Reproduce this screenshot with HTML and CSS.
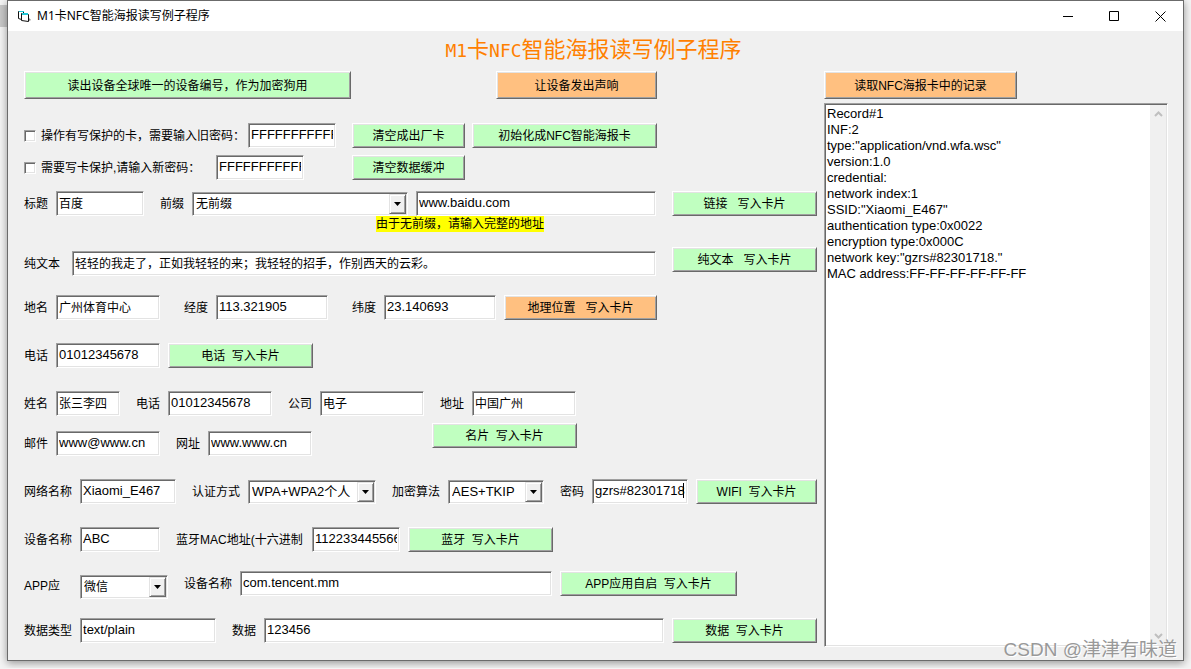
FILE: index.html
```html
<!DOCTYPE html>
<html lang="zh-CN">
<head>
<meta charset="utf-8">
<meta name="viewport" content="width=device-width, initial-scale=1">
<title>M1卡NFC智能海报读写例子程序</title>
<link rel="stylesheet" href="styles.css">
</head>
<body>
<main class="window">
  <header class="titlebar">
    <svg class="app-icon" width="14" height="13" viewBox="0 0 14 13" aria-hidden="true">
      <path d="M.5 8.500V1.500H5.500V3.500M.5 8.500L3.500 9.500" fill="#fff" stroke="#111"/>
      <path d="M1 1h5v1H1z" fill="#20c8d8"/>
      <path d="M3.500 3.500L10.500 4.500V11.500L3.500 10.500z" fill="#fff" stroke="#111"/>
      <path d="M4 3h6v2H4z" fill="#20c8d8"/>
      <path d="M11 8l2 2-2 1z" fill="#888"/>
    </svg>
    <span class="caption">M1卡NFC智能海报读写例子程序</span>
    <button class="sys" type="button" aria-label="最小化"><svg width="11" height="11" viewBox="0 0 11 11"><path d="M0 5.500h10" stroke="#000" fill="none"/></svg></button>
    <button class="sys" type="button" aria-label="最大化"><svg width="11" height="11" viewBox="0 0 11 11"><path d="M.5 .5h9v9h-9z" stroke="#000" fill="none"/></svg></button>
    <button class="sys" type="button" aria-label="关闭"><svg width="11" height="11" viewBox="0 0 11 11"><path d="M.5 .5l10 10M10.500 .5l-10 10" stroke="#000" fill="none"/></svg></button>
  </header>

  <h1 class="heading"><span class="half">M1</span>卡<span class="half">NFC</span>智能海报读写例子程序</h1>

  <div class="columns">
    <form class="form">
      <div class="row">
        <button class="btn tall w-device" type="button">读出设备全球唯一的设备编号，作为加密狗用</button>
        <button class="btn tall orange beep" type="button">让设备发出声响</button>
      </div>

      <div class="row space-xxl">
        <div class="field">
          <label class="check w-old"><input type="checkbox">操作有写保护的卡，需要输入旧密码：</label>
          <input class="text w-88" type="text" value="FFFFFFFFFFFF" aria-label="旧密码">
        </div>
        <div class="actions">
          <button class="btn w-clear" type="button">清空成出厂卡</button>
          <button class="btn w-init" type="button">初始化成NFC智能海报卡</button>
        </div>
      </div>

      <div class="row wide space-s">
        <div class="field">
          <label class="check w-new"><input type="checkbox">需要写卡保护,请输入新密码：</label>
          <input class="text w-88" type="text" value="FFFFFFFFFFFF" aria-label="新密码">
        </div>
        <button class="btn w-clear" type="button">清空数据缓冲</button>
      </div>

      <div class="row space-m">
        <div class="field"><label for="title">标题</label><input class="text w-88" id="title" type="text" value="百度"></div>
        <div class="field grow">
          <label for="prefix">前缀</label>
          <span class="combo w-216"><select id="prefix"><option>无前缀</option></select><span class="drop"><svg width="7" height="4" viewBox="0 0 7 4"><path d="M0 0h7L3.500 4z"/></svg></span></span>
          <input class="text grow" type="text" value="www.baidu.com" aria-label="网址">
        </div>
        <button class="btn w-145" type="button">链接&nbsp;&nbsp; 写入卡片</button>
      </div>
      <p class="hint"><mark>由于无前缀，请输入完整的地址</mark></p>

      <div class="row low space-t">
        <div class="field grow"><label class="w-40" for="plain">纯文本</label><input class="text grow" id="plain" type="text" value="轻轻的我走了，正如我轻轻的来；我轻轻的招手，作别西天的云彩。"></div>
        <button class="btn w-145 lead" type="button">纯文本&nbsp;&nbsp; 写入卡片</button>
      </div>

      <div class="row geo space-l">
        <div class="field"><label for="place">地名</label><input class="text w-104" id="place" type="text" value="广州体育中心"></div>
        <div class="field"><label for="lng">经度</label><input class="text w-112" id="lng" type="text" value="113.321905"></div>
        <div class="field">
          <label for="lat">纬度</label><input class="text w-112" id="lat" type="text" value="23.140693">
          <button class="btn orange w-153" type="button">地理位置&nbsp;&nbsp; 写入卡片</button>
        </div>
      </div>

      <div class="row space-xl">
        <div class="field">
          <label for="tel">电话</label><input class="text w-104" id="tel" type="text" value="01012345678">
          <button class="btn w-145" type="button">电话&nbsp; 写入卡片</button>
        </div>
      </div>

      <div class="row space-xl">
        <div class="field"><label for="name">姓名</label><input class="text w-64" id="name" type="text" value="张三李四"></div>
        <div class="field"><label for="tel2">电话</label><input class="text w-104" id="tel2" type="text" value="01012345678"></div>
        <div class="field"><label for="company">公司</label><input class="text w-104" id="company" type="text" value="电子"></div>
        <div class="field"><label for="address">地址</label><input class="text w-104" id="address" type="text" value="中国广州"></div>
      </div>

      <div class="row low card space-s">
        <div class="field"><label for="mail">邮件</label><input class="text w-104" id="mail" type="text" value="www@www.cn"></div>
        <div class="field"><label for="site">网址</label><input class="text w-104" id="site" type="text" value="www.www.cn"></div>
        <button class="btn w-145 lead vcard" type="button">名片&nbsp; 写入卡片</button>
      </div>

      <div class="row space-xl">
        <div class="field"><label for="ssid">网络名称</label><input class="text w-96" id="ssid" type="text" value="Xiaomi_E467"></div>
        <div class="field"><label for="auth">认证方式</label><span class="combo w-128"><select id="auth"><option>WPA+WPA2个人</option></select><span class="drop"><svg width="7" height="4" viewBox="0 0 7 4"><path d="M0 0h7L3.500 4z"/></svg></span></span></div>
        <div class="field"><label for="cipher">加密算法</label><span class="combo w-96"><select id="cipher"><option>AES+TKIP</option></select><span class="drop"><svg width="7" height="4" viewBox="0 0 7 4"><path d="M0 0h7L3.500 4z"/></svg></span></span></div>
        <div class="field">
          <label for="key">密码</label><span class="caret-box"><input class="text w-96" id="key" type="text" value="gzrs#82301718."><i class="caret"></i></span>
          <button class="btn w-121" type="button">WIFI&nbsp; 写入卡片</button>
        </div>
      </div>

      <div class="row space-xl">
        <div class="field"><label for="bt">设备名称</label><input class="text w-80" id="bt" type="text" value="ABC"></div>
        <div class="field">
          <label class="w-128" for="mac">蓝牙MAC地址(十六进制</label><input class="text w-88" id="mac" type="text" value="112233445566">
          <button class="btn w-145" type="button">蓝牙&nbsp; 写入卡片</button>
        </div>
      </div>

      <div class="row top space-l">
        <div class="field"><label class="w-48" for="app">APP应</label><span class="combo w-88 sunk"><select id="app"><option>微信</option></select><span class="drop"><svg width="7" height="4" viewBox="0 0 7 4"><path d="M0 0h7L3.500 4z"/></svg></span></span></div>
        <div class="field">
          <label for="pkg">设备名称</label><input class="text w-312" id="pkg" type="text" value="com.tencent.mm">
          <button class="btn w-177" type="button">APP应用自启&nbsp; 写入卡片</button>
        </div>
      </div>

      <div class="row space-l">
        <div class="field"><label for="mime">数据类型</label><input class="text w-136" id="mime" type="text" value="text/plain"></div>
        <div class="field grow">
          <label for="data">数据</label><input class="text grow" id="data" type="text" value="123456">
          <button class="btn w-145" type="button">数据&nbsp; 写入卡片</button>
        </div>
      </div>
    </form>

    <section class="records">
      <button class="btn tall orange w-193" type="button">读取NFC海报卡中的记录</button>
      <div class="log">
        <textarea aria-label="NFC海报卡中的记录" spellcheck="false">Record#1
INF:2
type:"application/vnd.wfa.wsc"
version:1.0
credential:
network index:1
SSID:"Xiaomi_E467"
authentication type:0x0022
encryption type:0x000C
network key:"gzrs#82301718."
MAC address:FF-FF-FF-FF-FF-FF</textarea>
        <div class="scrollbar">
          <svg width="9" height="6" viewBox="0 0 9 6"><path d="M1 5l3.500-3.500L8 5" fill="none" stroke="#bfbfbf" stroke-width="2"/></svg>
          <svg width="9" height="6" viewBox="0 0 9 6"><path d="M1 1l3.500 3.500L8 1" fill="none" stroke="#bfbfbf" stroke-width="2"/></svg>
        </div>
      </div>
    </section>
  </div>
</main>
<div class="watermark">CSDN @津津有味道</div>
</body>
</html>
```

FILE: styles.css
```css
* {
  box-sizing: border-box;
}

body {
  margin: 0;
  padding: 0 7px 7px;
  background: linear-gradient(#c8c8c8, #c8c8c8) 0 5px / 7px 22px no-repeat #f4f4f4;
  color: #000;
  font: 12px/16px "Liberation Sans", "Noto Sans CJK SC", sans-serif;
}

button,
input,
select,
textarea {
  margin: 0;
  border-radius: 0;
  color: inherit;
  font: inherit;
}

.window {
  border: 1px solid #6b6b6b;
  background: #f0f0f0;
  box-shadow: 0 2px 8px rgba(0, 0, 0, 0.4);
}

.titlebar {
  display: flex;
  align-items: center;
  height: 30px;
  padding-left: 10px;
  background: #fff;
  font-family: "Noto Sans", "Noto Sans CJK SC", sans-serif;
}

.caption {
  flex: 1;
  margin-left: 5px;
  white-space: nowrap;
}

.sys {
  display: flex;
  align-items: center;
  justify-content: center;
  width: 46px;
  height: 30px;
  padding: 0;
  border: 0;
  background: none;
}

.heading {
  margin: 0;
  height: 40px;
  padding-right: 4px;
  color: #ff8000;
  font-size: 22px;
  font-weight: 400;
  line-height: 38px;
  text-align: center;
}

.half {
  font-family: "DejaVu Sans Mono", monospace;
  font-size: 18px;
}

.columns {
  display: grid;
  grid-template-columns: minmax(0, 793fr) minmax(0, 344fr);
  gap: 7px;
  padding: 0 15px 13px 16px;
}

.form {
  display: flex;
  flex-direction: column;
  padding-bottom: 4px;
}

.row {
  display: flex;
  align-items: center;
  gap: 16px;
}

.field,
.actions {
  display: flex;
  align-items: center;
  gap: 8px;
}

.actions {
  gap: 7px;
}

.row.wide {
  gap: 48px;
}

.row.geo {
  gap: 24px;
}

.row.low {
  align-items: flex-end;
  min-height: 29px;
}

.row.card {
  min-height: 33px;
}

.row.top {
  align-items: flex-start;
}

.lead {
  align-self: flex-start;
}

.vcard {
  margin-left: 104px;
}

.beep {
  width: 161px;
  margin-left: 129px;
}

.space-s {
  margin-top: 7px;
}

.space-m {
  margin-top: 11px;
}

.space-t {
  margin-top: 15px;
}

.space-l {
  margin-top: 19px;
}

.space-xl {
  margin-top: 23px;
}

.space-xxl {
  margin-top: 24px;
}

.grow {
  flex: 1;
  min-width: 0;
}

label {
  flex: none;
  padding-top: 1px;
  white-space: nowrap;
}

.check {
  display: flex;
  align-items: center;
  gap: 5px;
}

.check input {
  appearance: none;
  flex: none;
  width: 12px;
  height: 12px;
  border: 1px solid;
  border-color: #a0a0a0 #fff #fff #a0a0a0;
  background: #fff;
  box-shadow: inset 1px 1px #696969, inset -1px -1px #e3e3e3;
}

.text,
.combo,
.log {
  border: 1px solid;
  border-color: #a0a0a0 #fff #fff #a0a0a0;
  background: #fff;
  box-shadow: inset 1px 1px #696969, inset -1px -1px #e3e3e3;
}

.text {
  height: 25px;
  padding: 1px 2px 4px;
  font-size: 13px;
  outline: 0;
}

#title,
#plain,
#place,
#name,
#company,
#address {
  font-size: 12px;
}

.combo {
  display: flex;
  height: 24px;
  padding: 1px;
}

.combo select {
  appearance: none;
  flex: 1;
  min-width: 0;
  padding: 0 2px;
  border: 0;
  background: none;
  outline: 0;
}

#auth,
#cipher {
  font-size: 13px;
}

.sunk {
  margin-top: 4px;
}

.drop {
  display: flex;
  align-items: center;
  justify-content: center;
  width: 17px;
  border: 1px solid;
  border-color: #e3e3e3 #696969 #696969 #e3e3e3;
  background: #f0f0f0;
  box-shadow: inset 1px 1px #fff, inset -1px -1px #a0a0a0;
  pointer-events: none;
}

.btn {
  flex: none;
  height: 25px;
  padding: 1px 0 0;
  border: 1px solid;
  border-color: #fff #696969 #696969 #fff;
  background: #c0ffc0;
  box-shadow: inset 1px 1px #e3e3e3, inset -1px -1px #a0a0a0;
  white-space: nowrap;
}

.btn.orange {
  background: #ffc080;
}

.btn.tall {
  height: 28px;
}

.hint {
  margin: 0;
  height: 16px;
  padding-left: 352px;
}

.hint mark {
  display: block;
  width: max-content;
  padding-top: 1px;
  line-height: 15px;
  background: #ff0;
}

.caret-box {
  position: relative;
  display: flex;
}

.caret {
  position: absolute;
  top: 4px;
  right: 4px;
  width: 1px;
  height: 15px;
  background: #000;
}

.records {
  display: flex;
  flex-direction: column;
  align-items: flex-start;
  gap: 4px;
}

.log {
  display: flex;
  flex: 1;
  align-self: stretch;
  padding: 1px;
}

.log textarea {
  flex: 1;
  min-width: 0;
  padding: 1px;
  border: 0;
  outline: 0;
  background: none;
  font-size: 13px;
  line-height: 16px;
  resize: none;
  overflow: hidden;
}

.scrollbar {
  display: flex;
  flex-direction: column;
  align-items: center;
  justify-content: space-between;
  width: 16px;
  padding: 6px 0;
  background: #f0f0f0;
}

.watermark {
  position: absolute;
  right: 14px;
  bottom: 6px;
  color: #999;
  font-size: 19px;
  line-height: 26px;
  text-shadow: 1px 1px #fff;
  pointer-events: none;
}

.w-40 { width: 40px; }
.w-48 { width: 48px; }
.w-64 { width: 64px; }
.w-80 { width: 80px; }
.w-88 { width: 88px; }
.w-96 { width: 96px; }
.w-104 { width: 104px; }
.w-112 { width: 112px; }
.w-121 { width: 121px; }
.w-128 { width: 128px; }
.w-136 { width: 136px; }
.w-145 { width: 145px; }
.w-153 { width: 153px; }
.w-177 { width: 177px; }
.w-193 { width: 193px; }
.w-216 { width: 216px; }
.w-312 { width: 312px; }
.w-clear { width: 113px; }
.w-init { width: 185px; }
.w-old { width: 216px; }
.w-new { width: 184px; }
.w-device { width: 327px; }
```
